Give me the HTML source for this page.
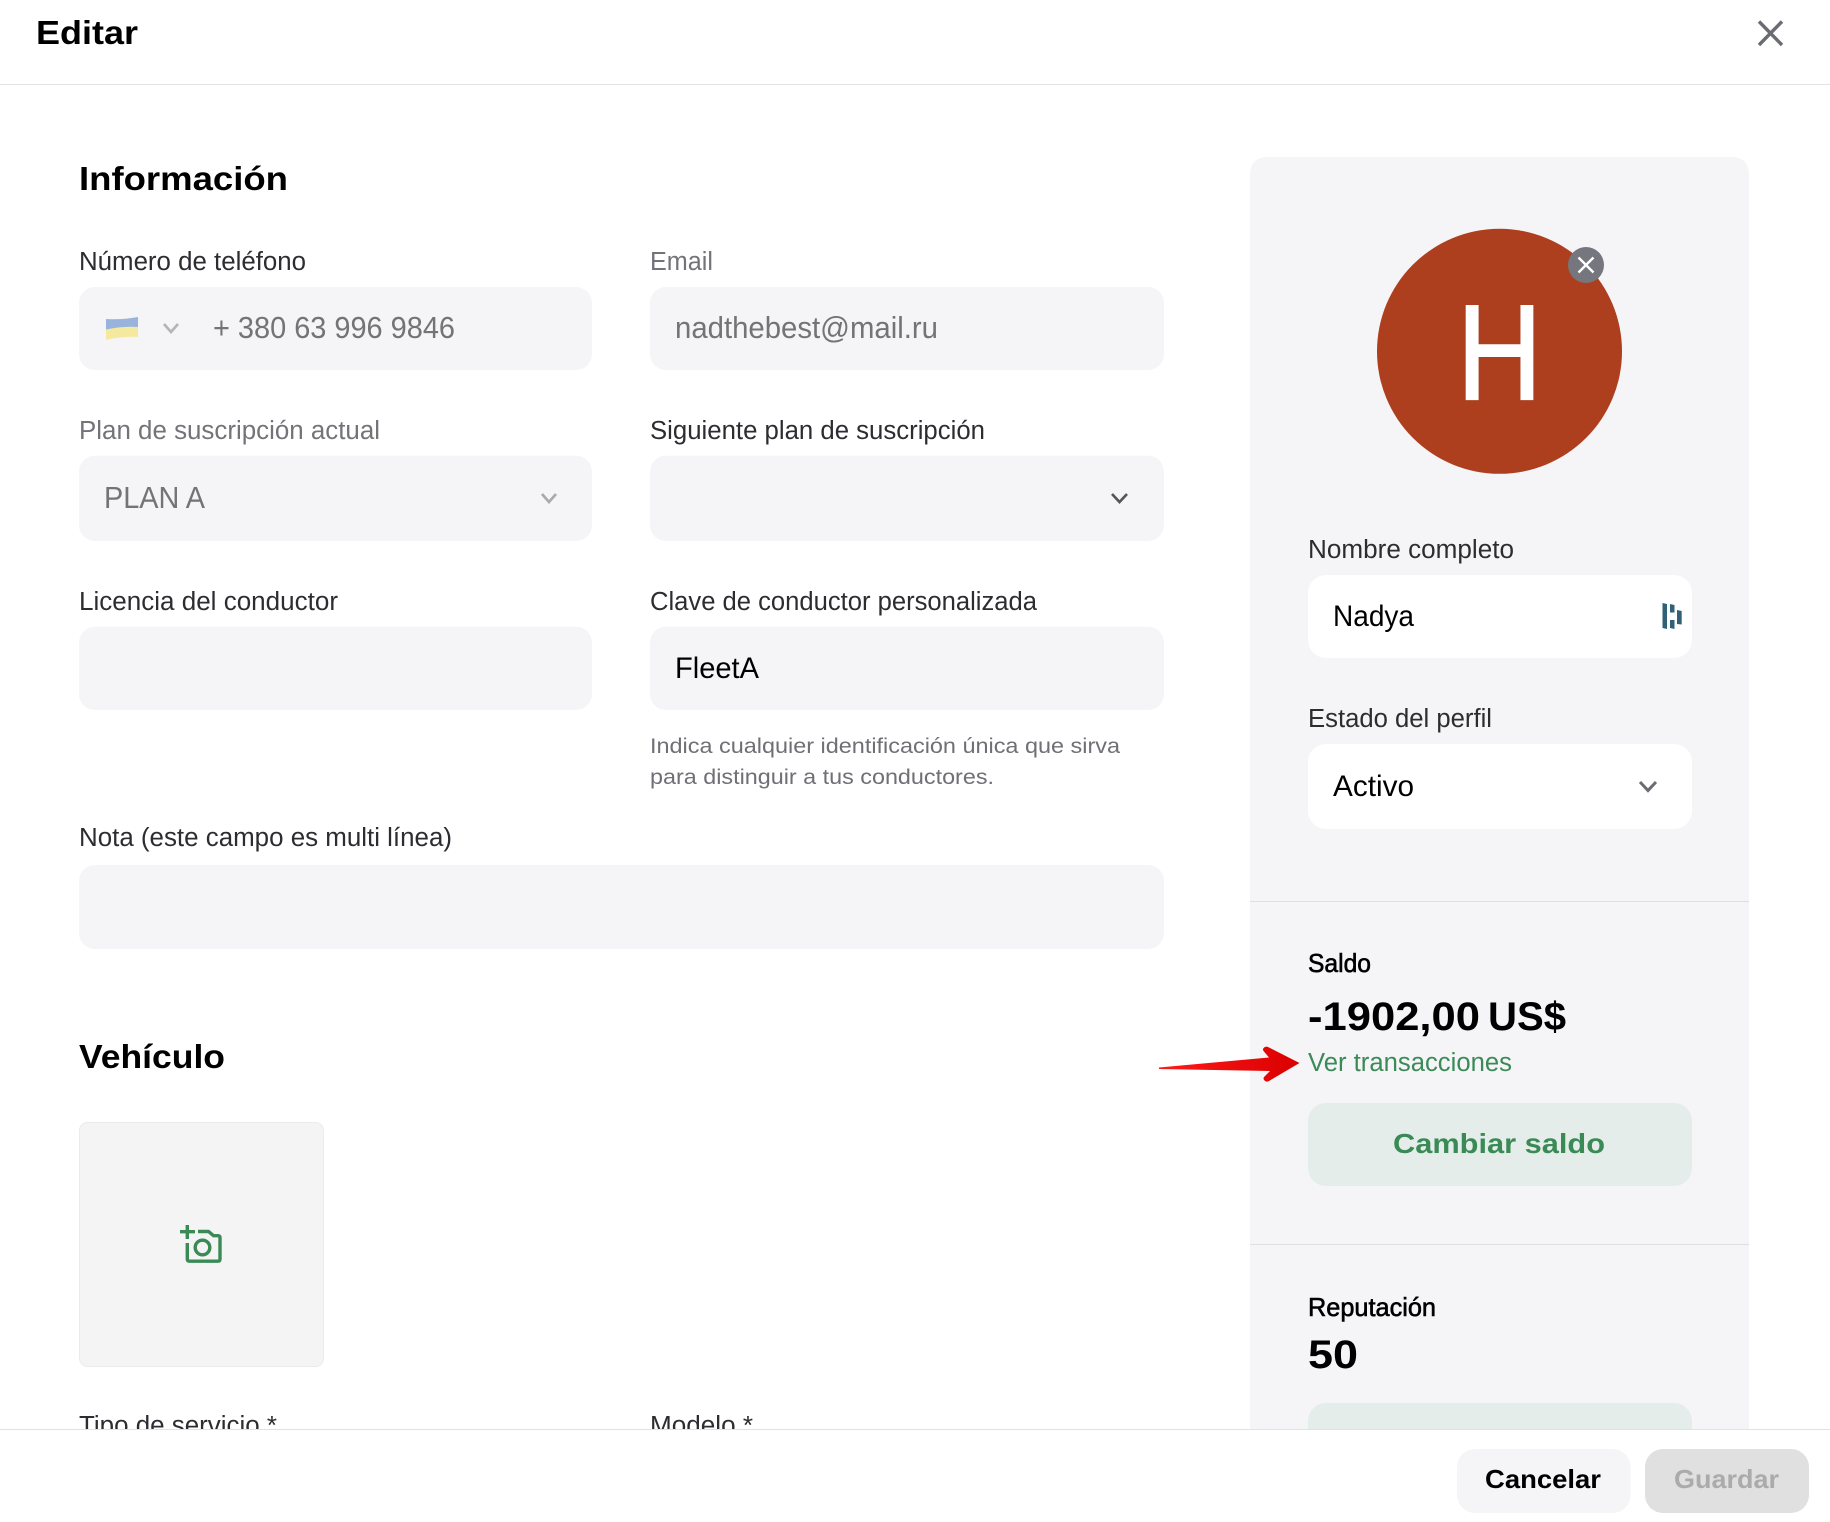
<!DOCTYPE html>
<html lang="es">
<head>
<meta charset="utf-8">
<title>Editar</title>
<style>
html,body{margin:0;padding:0;background:#fff;width:1830px;height:1522px;overflow:hidden}
svg{display:block}
text{font-family:"Liberation Sans",Arial,sans-serif}
.lab{font-size:25.5px;fill:#2c2c31}
.dis{font-size:25.5px;fill:#737378}
.val{font-size:30.5px;fill:#737378}
.blk{font-size:30px;fill:#000}
.h{font-size:33.5px;font-weight:bold;fill:#000}
.help{font-size:21.5px;fill:#6f6f75}
.med{font-size:26px;fill:#000;stroke:#000;stroke-width:.6}
</style>
</head>
<body>
<svg width="1830" height="1522" viewBox="0 0 1830 1522" xmlns="http://www.w3.org/2000/svg">
<defs>
<linearGradient id="ar" x1="0" y1="0" x2="1" y2="0"><stop offset="0" stop-color="#ff1a1a"/><stop offset="1" stop-color="#d90000"/></linearGradient>
</defs>
<rect width="1830" height="1522" fill="#fff"/>

<!-- header -->
<text x="36" y="44" class="h" textLength="102" lengthAdjust="spacingAndGlyphs">Editar</text>
<path d="M1759 21.500L1782 45M1782 21.500L1759 45" stroke="#6b6c72" stroke-width="3.400" fill="none"/>
<rect x="0" y="84" width="1830" height="1" fill="#e3e3e5"/>

<!-- Información -->
<text x="79" y="190" class="h" textLength="209" lengthAdjust="spacingAndGlyphs">Información</text>

<text x="79" y="270" class="lab" textLength="227" lengthAdjust="spacingAndGlyphs">Número de teléfono</text>
<rect x="79" y="287" width="513" height="83" rx="16" fill="#f5f5f7"/>
<path d="M106 319Q122 320 138 317V337Q122 336 106 340Z" fill="#f5e9a0"/>
<path d="M106 319Q122 320 138 317V327Q122 326 106 329.500Z" fill="#98b4dc"/>
<path d="M164 324L171 332L178 324" stroke="#b4b4b9" stroke-width="2.700" fill="none"/>
<text x="213" y="338" class="val" textLength="242" lengthAdjust="spacingAndGlyphs">+ 380 63 996 9846</text>

<text x="650" y="270" class="dis" textLength="63" lengthAdjust="spacingAndGlyphs">Email</text>
<rect x="650" y="287" width="514" height="83" rx="16" fill="#f5f5f7"/>
<text x="675" y="338" class="val" textLength="263" lengthAdjust="spacingAndGlyphs">nadthebest@mail.ru</text>

<text x="79" y="439" class="dis" textLength="301" lengthAdjust="spacingAndGlyphs">Plan de suscripción actual</text>
<rect x="79" y="455.700" width="513" height="85.300" rx="16" fill="#f5f5f7"/>
<text x="104" y="508" class="val" textLength="101" lengthAdjust="spacingAndGlyphs">PLAN A</text>
<path d="M542 494L549 502L556 494" stroke="#a9a9ae" stroke-width="2.700" fill="none"/>

<text x="650" y="439" class="lab" textLength="335" lengthAdjust="spacingAndGlyphs">Siguiente plan de suscripción</text>
<rect x="650" y="455.700" width="514" height="85.300" rx="16" fill="#f5f5f7"/>
<path d="M1112 494L1119.500 502L1127 494" stroke="#55565c" stroke-width="2.700" fill="none"/>

<text x="79" y="610" class="lab" textLength="259" lengthAdjust="spacingAndGlyphs">Licencia del conductor</text>
<rect x="79" y="626.700" width="513" height="83.300" rx="16" fill="#f5f5f7"/>

<text x="650" y="610" class="lab" textLength="387" lengthAdjust="spacingAndGlyphs">Clave de conductor personalizada</text>
<rect x="650" y="626.700" width="514" height="83.300" rx="16" fill="#f5f5f7"/>
<text x="675" y="678" class="blk" textLength="84" lengthAdjust="spacingAndGlyphs">FleetA</text>
<text x="650" y="753" class="help" textLength="470" lengthAdjust="spacingAndGlyphs">Indica cualquier identificación única que sirva</text>
<text x="650" y="784" class="help" textLength="344" lengthAdjust="spacingAndGlyphs">para distinguir a tus conductores.</text>

<text x="79" y="846" class="lab" textLength="373" lengthAdjust="spacingAndGlyphs">Nota (este campo es multi línea)</text>
<rect x="79" y="865" width="1085" height="84" rx="16" fill="#f5f5f7"/>

<!-- Vehículo -->
<text x="79" y="1068" class="h" textLength="146" lengthAdjust="spacingAndGlyphs">Vehículo</text>
<rect x="79.500" y="1122.500" width="244" height="244" rx="8" fill="#f4f4f5" stroke="#ebebec"/>
<g stroke="#3a8a56" stroke-width="3.400" fill="none">
<path d="M180 1231.700H195M187.300 1225V1239"/>
<path d="M187.300 1243V1259Q187.300 1261.200 189.500 1261.200H218Q220 1261.200 220 1259V1238Q220 1235.700 218 1235.700H213.500L208.500 1231.500H198"/>
<circle cx="202.500" cy="1247.500" r="7.300"/>
</g>

<text x="79" y="1434" class="lab" textLength="198" lengthAdjust="spacingAndGlyphs">Tipo de servicio *</text>
<text x="650" y="1434" class="lab" textLength="103" lengthAdjust="spacingAndGlyphs">Modelo *</text>

<!-- sidebar -->
<path d="M1250 1440V175Q1250 157 1268 157H1731Q1749 157 1749 175V1440Z" fill="#f5f5f7"/>
<circle cx="1499.500" cy="351.300" r="122.500" fill="#ad3f1f"/>
<text x="1499.500" y="399" font-size="135" fill="#fff" stroke="#fff" stroke-width="2.200" text-anchor="middle" textLength="85" lengthAdjust="spacingAndGlyphs">H</text>
<circle cx="1586" cy="265" r="18" fill="#75767e"/>
<path d="M1578.500 257.500L1593.500 272.500M1593.500 257.500L1578.500 272.500" stroke="#fff" stroke-width="2.400"/>

<text x="1308" y="558" class="lab" textLength="206" lengthAdjust="spacingAndGlyphs">Nombre completo</text>
<rect x="1308" y="575" width="384" height="83" rx="18" fill="#fff"/>
<text x="1333" y="626" class="blk" textLength="81" lengthAdjust="spacingAndGlyphs">Nadya</text>
<g fill="#2f6277">
<path d="M1662.500 603L1667 604V629L1662.500 628Z"/>
<path d="M1670 604L1674.500 605V612.500H1670Z"/>
<path d="M1670 620H1674.500V629L1670 628Z"/>
<path d="M1677 610L1681.700 611V624.500L1677 624Z"/>
</g>

<text x="1308" y="727" class="lab" textLength="184" lengthAdjust="spacingAndGlyphs">Estado del perfil</text>
<rect x="1308" y="744" width="384" height="85" rx="18" fill="#fff"/>
<text x="1333" y="796" class="blk" textLength="81" lengthAdjust="spacingAndGlyphs">Activo</text>
<path d="M1640 782L1648 790.500L1656 782" stroke="#6b6c72" stroke-width="3" fill="none"/>

<rect x="1250" y="901" width="499" height="1" fill="#dfdfe2"/>

<text x="1308" y="972" class="med" textLength="63" lengthAdjust="spacingAndGlyphs">Saldo</text>
<text x="1308" y="1030" font-size="40" font-weight="bold" fill="#000" textLength="172" lengthAdjust="spacingAndGlyphs">-1902,00</text>
<text x="1488" y="1030" font-size="40" font-weight="bold" fill="#000" textLength="78" lengthAdjust="spacingAndGlyphs">US$</text>
<text x="1308" y="1071" font-size="25.500" fill="#3b8a58" textLength="204" lengthAdjust="spacingAndGlyphs">Ver transacciones</text>
<path d="M1159 1067.500L1269 1057.500L1263.500 1051Q1262 1048.500 1265 1047Q1267 1046 1269 1047.500L1299.500 1063L1269 1081Q1266.500 1082.500 1264.500 1080.500Q1262.500 1078.500 1264.500 1076.500L1270 1071L1159 1069Z" fill="url(#ar)"/>
<rect x="1308" y="1103" width="384" height="83" rx="18" fill="#e4edea"/>
<text x="1393" y="1153" font-size="28" font-weight="bold" fill="#3a8a56" textLength="212" lengthAdjust="spacingAndGlyphs">Cambiar saldo</text>

<rect x="1250" y="1244" width="499" height="1" fill="#dfdfe2"/>

<text x="1308" y="1316" class="med" textLength="128" lengthAdjust="spacingAndGlyphs">Reputación</text>
<text x="1308" y="1368" font-size="40" font-weight="bold" fill="#000" textLength="50" lengthAdjust="spacingAndGlyphs">50</text>
<rect x="1308" y="1403" width="384" height="60" rx="18" fill="#e4edea"/>

<!-- footer -->
<rect x="0" y="1429" width="1830" height="93" fill="#fff"/>
<rect x="0" y="1429" width="1830" height="1" fill="#e2e2e4"/>
<rect x="1457" y="1449" width="173.500" height="64" rx="18" fill="#f5f5f7"/>
<text x="1485" y="1488" font-size="26" font-weight="bold" fill="#000" textLength="116" lengthAdjust="spacingAndGlyphs">Cancelar</text>
<rect x="1645" y="1449" width="164" height="64" rx="18" fill="#e0e0e0"/>
<text x="1674" y="1488" font-size="26" font-weight="bold" fill="#ababab" textLength="105" lengthAdjust="spacingAndGlyphs">Guardar</text>
</svg>
</body>
</html>
